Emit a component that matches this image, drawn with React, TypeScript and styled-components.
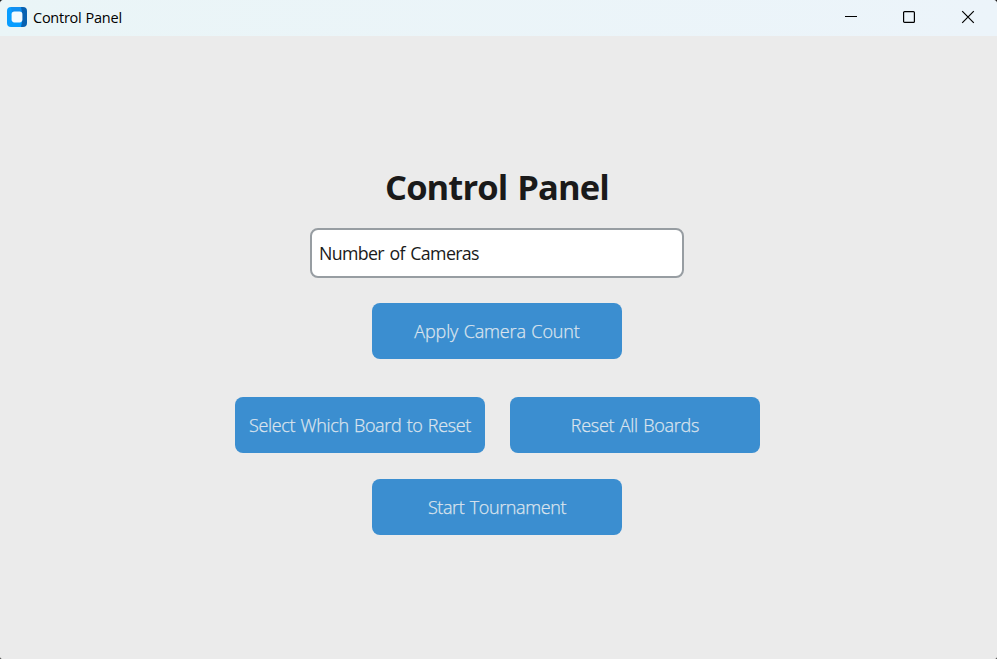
import React from "react";
import styled, { createGlobalStyle } from "styled-components";

const GlobalStyle = createGlobalStyle`
  *, *::before, *::after { box-sizing: border-box; }
  html, body { margin: 0; background: #1c1c1c; }
  body { overflow: hidden; }
`;

const Window = styled.div`
  display: flex;
  flex-direction: column;
  width: 997px;
  height: 659px;
  overflow: hidden;
  border-radius: 4px 4px 2px 2px;
  background: #ebebeb;
  font-family: "Open Sans", "Noto Sans", sans-serif;
  color: #1a1a1a;
`;

const TitleBar = styled.header`
  display: flex;
  align-items: center;
  height: 36px;
  flex: none;
  padding-left: 7px;
  background: linear-gradient(90deg, #eaf5f7, #ecf4fa);
`;

const AppIcon = styled.svg`
  width: 20px;
  height: 20px;
  margin-top: -2px;
`;

const WindowTitle = styled.span`
  flex: 1;
  margin-left: 6px;
  font-size: 14.5px;
  font-weight: 400;
  line-height: 20px;
  letter-spacing: -0.25px;
  word-spacing: 0.6px;
  color: #000;
`;

const Caption = styled.button`
  display: grid;
  place-items: center;
  width: 58.5px;
  height: 34px;
  align-self: flex-start;
  padding: 0;
  border: 0;
  background: transparent;
`;

const CaptionGlyph = styled.svg`
  width: 14px;
  height: 14px;
  fill: none;
  stroke: #000;
  stroke-width: 1.2;
`;

const Content = styled.main`
  display: flex;
  flex-direction: column;
  align-items: center;
  padding-top: 126px;
  padding-right: 3px;
`;

const Heading = styled.h1`
  margin: 0;
  height: 50px;
  font-size: 34.5px;
  line-height: 50px;
  font-weight: 700;
  letter-spacing: -0.9px;
  word-spacing: 2px;
  white-space: nowrap;
`;

const CameraInput = styled.input`
  width: 374px;
  height: 50px;
  margin-top: 16px;
  padding: 0 7px 1px;
  border: 2px solid #979da2;
  border-radius: 8px;
  background: #fff;
  font: 400 17.8px "Open Sans", "Noto Sans", sans-serif;
  letter-spacing: -0.65px;
  word-spacing: 1.5px;
  color: #1a1a1a;
  outline: 0;
`;

const ActionButton = styled.button<{ $gap?: number; $tracking: number }>`
  width: 250px;
  height: 56px;
  margin: ${(p) => p.$gap ?? 0}px 0 0;
  padding: 0 0 1px;
  border: 0;
  border-radius: 8px;
  background: #3b8ed0;
  color: #dce4ee;
  font: 300 18px "Open Sans", "Noto Sans", sans-serif;
  -webkit-text-stroke: 0.25px #dce4ee;
  letter-spacing: ${(p) => p.$tracking}px;
  word-spacing: 1px;
  white-space: nowrap;
`;

const BoardActions = styled.div`
  display: flex;
  gap: 25px;
  margin-top: 38px;
  margin-left: 1px;
`;

export default function App() {
  return (
    <>
      <GlobalStyle />
      <Window>
        <TitleBar>
          <AppIcon viewBox="0 0 20 20">
            <path d="M4 0h11v20H4a4 4 0 0 1-4-4V4a4 4 0 0 1 4-4Z" fill="#079dff" />
            <path d="M4 0h11l1 5H5Z" fill="#118ff0" />
            <path d="M14 0h2a4 4 0 0 1 4 4v12a4 4 0 0 1-4 4h-2l1-5V5Z" fill="#0961b0" />
            <rect x="4.6" y="4.6" width="10.8" height="10.8" rx="2.8" fill="#f4fbff" />
          </AppIcon>
          <WindowTitle>Control Panel</WindowTitle>
          <Caption aria-label="Minimize">
            <CaptionGlyph viewBox="0 0 14 14"><path d="M1 6.5h12" strokeWidth="1" /></CaptionGlyph>
          </Caption>
          <Caption aria-label="Maximize">
            <CaptionGlyph viewBox="0 0 14 14"><rect x="1.6" y="1.6" width="10.8" height="10.8" rx="1" /></CaptionGlyph>
          </Caption>
          <Caption aria-label="Close">
            <CaptionGlyph viewBox="0 0 14 14"><path d="m1.2 1.2 11.6 11.6m0-11.6L1.2 12.8" /></CaptionGlyph>
          </Caption>
        </TitleBar>
        <Content>
          <Heading>Control Panel</Heading>
          <CameraInput defaultValue="Number of Cameras" aria-label="Number of Cameras" />
          <ActionButton $gap={25} $tracking={-0.15}>Apply Camera Count</ActionButton>
          <BoardActions>
            <ActionButton $tracking={-0.35}>Select Which Board to Reset</ActionButton>
            <ActionButton $tracking={-0.27}>Reset All Boards</ActionButton>
          </BoardActions>
          <ActionButton $gap={26} $tracking={-0.38}>Start Tournament</ActionButton>
        </Content>
      </Window>
    </>
  );
}
